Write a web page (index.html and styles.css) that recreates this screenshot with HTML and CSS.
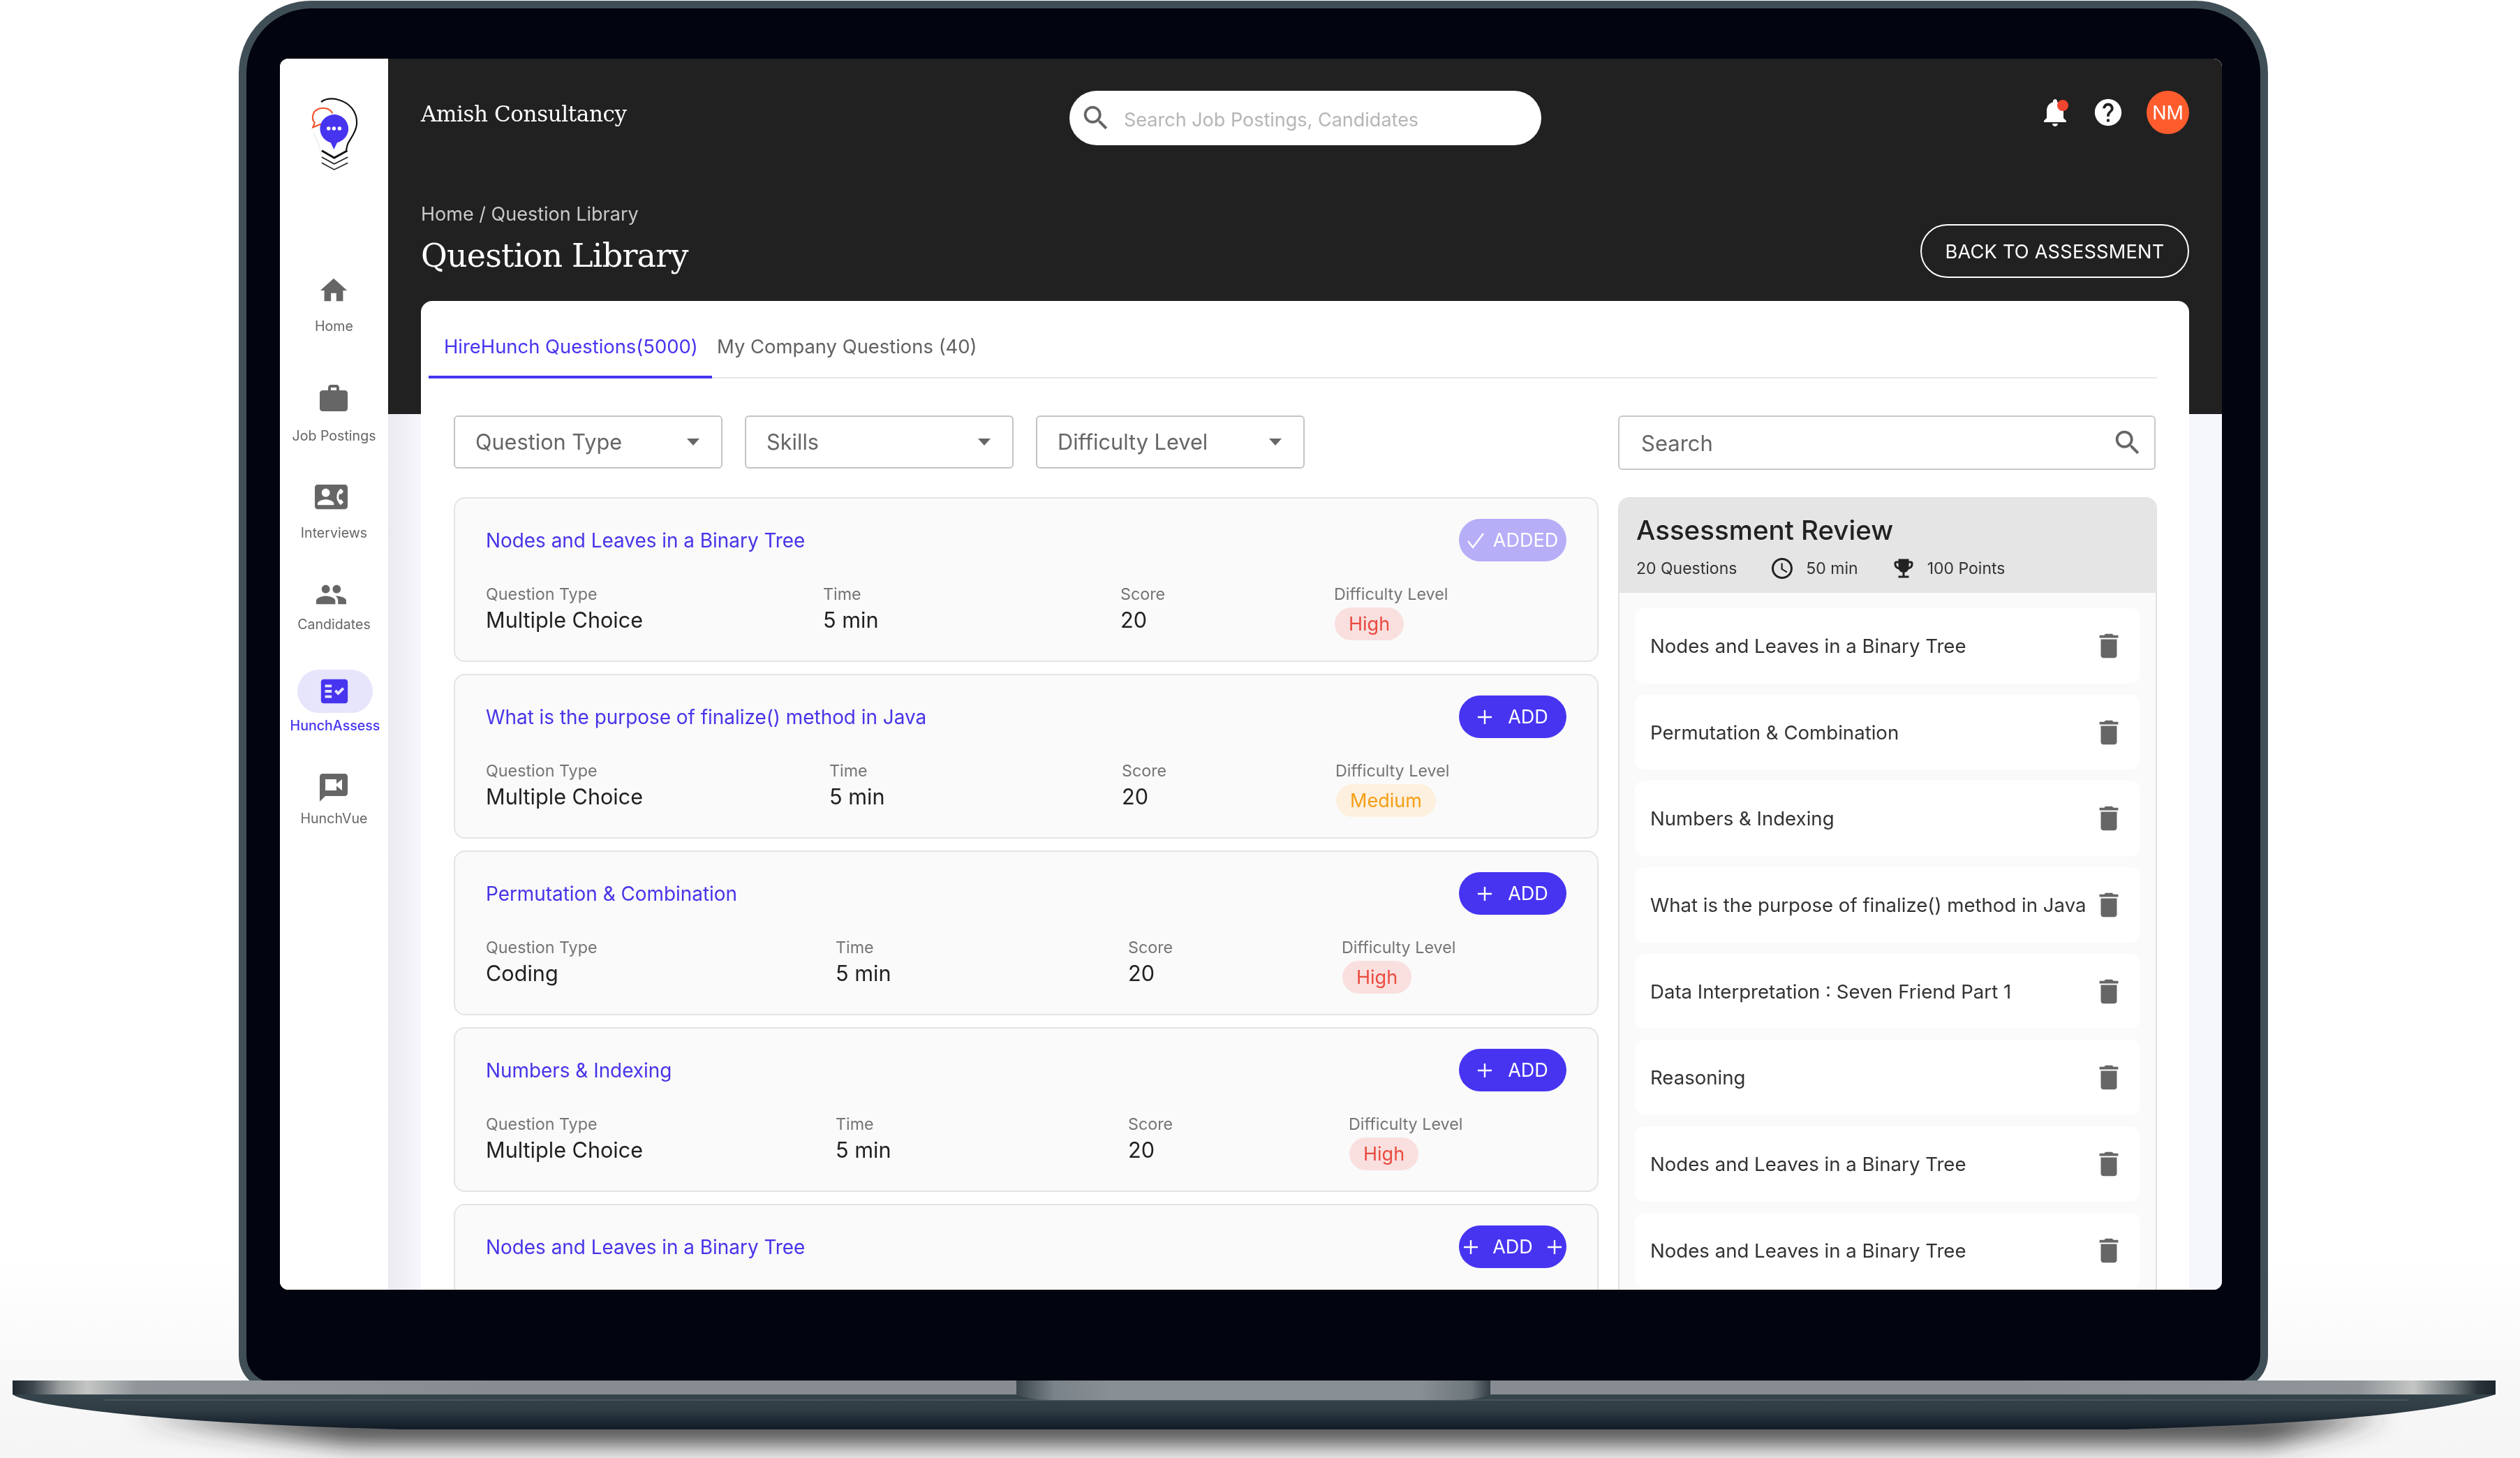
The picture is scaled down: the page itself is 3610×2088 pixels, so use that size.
FILE: index.html
```html
<!DOCTYPE html>
<html lang="en">
<head>
<meta charset="utf-8">
<title>Question Library</title>
<link rel="stylesheet" href="styles.css">
</head>
<body>
<svg class="sprite" aria-hidden="true">
  <symbol id="i-home" viewBox="0 0 24 24"><path d="M10 20v-6h4v6h5v-8h3L12 3 2 12h3v8z"/></symbol>
  <symbol id="i-work" viewBox="0 0 24 24"><path d="M20 6h-4V4c0-1.11-.89-2-2-2h-4c-1.11 0-2 .89-2 2v2H4c-1.11 0-1.99.89-1.99 2L2 19c0 1.11.89 2 2 2h16c1.11 0 2-.89 2-2V8c0-1.11-.89-2-2-2zm-6 0h-4V4h4v2z"/></symbol>
  <symbol id="i-contact" viewBox="0 0 24 24"><path d="M22 3H2C.9 3 0 3.9 0 5v14c0 1.1.9 2 2 2h20c1.1 0 1.99-.9 1.99-2L24 5c0-1.1-.9-2-2-2zM8 6c1.66 0 3 1.34 3 3s-1.34 3-3 3-3-1.34-3-3 1.34-3 3-3zm6 12H2v-1c0-2 4-3.1 6-3.1s6 1.1 6 3.1v1zm3.85-4h1.64L21 16l-1.99 1.99c-1.31-.98-2.28-2.38-2.73-3.99-.18-.64-.28-1.31-.28-2s.1-1.36.28-2c.45-1.62 1.42-3.01 2.73-3.99L21 8l-1.51 2h-1.64c-.22.63-.35 1.3-.35 2s.13 1.37.35 2z"/></symbol>
  <symbol id="i-people" viewBox="0 0 24 24"><path d="M16 11c1.66 0 2.99-1.34 2.99-3S17.66 5 16 5c-1.66 0-3 1.34-3 3s1.34 3 3 3zm-8 0c1.66 0 2.99-1.34 2.99-3S9.66 5 8 5C6.34 5 5 6.34 5 8s1.34 3 3 3zm0 2c-2.33 0-7 1.17-7 3.5V19h14v-2.5c0-2.33-4.67-3.5-7-3.5zm8 0c-.29 0-.62.02-.97.05 1.16.84 1.97 1.97 1.97 3.45V19h6v-2.5c0-2.33-4.67-3.5-7-3.5z"/></symbol>
  <symbol id="i-fact" viewBox="0 0 24 24"><path d="M20 3H4c-1.1 0-2 .9-2 2v14c0 1.1.9 2 2 2h16c1.1 0 2-.9 2-2V5c0-1.1-.9-2-2-2zM10 17H5v-2h5v2zm0-4H5v-2h5v2zm0-4H5V7h5v2zm4.82 6L12 12.16l1.41-1.41 1.41 1.42L17.99 9l1.42 1.42L14.82 15z"/></symbol>
  <symbol id="i-vue" viewBox="0 0 24 24"><path d="M20 2H4c-1.1 0-1.99.9-1.99 2L2 22l4-4h14c1.1 0 2-.9 2-2V4c0-1.1-.9-2-2-2zm-2 12l-4-3.2V14H6V6h8v3.2L18 6v8z"/></symbol>
  <symbol id="i-search" viewBox="0 0 24 24"><path d="M15.5 14h-.79l-.28-.27C15.41 12.59 16 11.11 16 9.5 16 5.91 13.09 3 9.5 3S3 5.91 3 9.5 5.91 16 9.5 16c1.61 0 3.09-.59 4.23-1.57l.27.28v.79l5 4.99L20.49 19l-4.99-5zm-6 0C7.01 14 5 11.99 5 9.5S7.01 5 9.5 5 14 7.01 14 9.5 11.99 14 9.5 14z"/></symbol>
  <symbol id="i-trash" viewBox="0 0 24 24"><path d="M6 19c0 1.1.9 2 2 2h8c1.1 0 2-.9 2-2V7H6v12zM19 4h-3.5l-1-1h-5l-1 1H5v2h14V4z"/></symbol>
  <symbol id="i-plus" viewBox="0 0 24 24"><path d="M12 1v22M1 12h22" fill="none" stroke="currentColor" stroke-width="2.6"/></symbol>
</svg>

<div class="lid">
  <div class="screen">
    <aside class="sidebar">
      <svg class="logo" viewBox="250 305 165 250" aria-hidden="true">
        <path d="M288 322C300 310 325 308 345 314C385 325 410 355 408 395C407 425 385 445 377 465C374 475 373 482 372 490" fill="none" stroke="#111" stroke-width="5"/>
        <path d="M288 500C285 470 272 450 262 425" fill="none" stroke="#eee" stroke-width="4"/>
        <path d="M326 360C318 342 292 338 275 347C257 356 255 380 266 392L260 407L288 396" fill="none" stroke="#f0532d" stroke-width="5"/>
        <path d="M332 364C306 364 284 386 284 412C284 436 302 455 320 459L331 482L342 459C362 454 380 436 380 412C380 386 358 364 332 364Z" fill="#4734ef"/>
        <circle cx="313" cy="411" r="6.5" fill="#fff"/><circle cx="331" cy="411" r="6.5" fill="#fff"/><circle cx="350" cy="411" r="6.5" fill="#fff"/>
        <path d="M290 486L332 510L376 486" fill="none" stroke="#111" stroke-width="7"/>
        <path d="M290 508L332 531L378 508" fill="none" stroke="#222" stroke-width="4"/>
        <path d="M290 527L332 550L378 527" fill="none" stroke="#222" stroke-width="4"/>
      </svg>
      <nav class="nav">
        <a class="nav-item"><span class="nav-icon"><svg class="ico-home"><use href="#i-home"/></svg></span><span class="nav-label">Home</span></a>
        <a class="nav-item"><span class="nav-icon"><svg class="ico-work"><use href="#i-work"/></svg></span><span class="nav-label">Job Postings</span></a>
        <a class="nav-item"><span class="nav-icon nav-icon-left"><svg class="ico-contact"><use href="#i-contact"/></svg></span><span class="nav-label">Interviews</span></a>
        <a class="nav-item"><span class="nav-icon nav-icon-left"><svg class="ico-people"><use href="#i-people"/></svg></span><span class="nav-label">Candidates</span></a>
        <a class="nav-item active"><span class="nav-icon"><svg class="ico-fact"><use href="#i-fact"/></svg></span><span class="nav-label">HunchAssess</span></a>
        <a class="nav-item"><span class="nav-icon"><svg class="ico-vue"><use href="#i-vue"/></svg></span><span class="nav-label">HunchVue</span></a>
      </nav>
    </aside>

    <main class="main">
      <header class="topbar">
        <div class="brand">Amish Consultancy</div>
        <div class="global-search">
          <svg class="search-ico"><use href="#i-search"/></svg>
          <span>Search Job Postings, Candidates</span>
        </div>
        <div class="top-actions">
          <span class="bell">
            <svg class="bell-ico" viewBox="0 0 24 24"><path d="M12 22c1.1 0 2-.9 2-2h-4c0 1.1.89 2 2 2zm6-6v-5c0-3.07-1.64-5.64-4.5-6.32V4c0-.83-.67-1.5-1.5-1.5s-1.5.67-1.5 1.5v.68C7.63 5.36 6 7.92 6 11v5l-2 2v1h16v-1l-2-2z"/></svg>
            <i class="bell-dot"></i>
          </span>
          <svg class="help-ico" viewBox="0 0 24 24"><path d="M12 2C6.48 2 2 6.48 2 12s4.48 10 10 10 10-4.48 10-10S17.52 2 12 2zm1 17h-2v-2h2v2zm2.07-7.75l-.9.92C13.45 12.9 13 13.5 13 15h-2v-.5c0-1.1.45-2.1 1.17-2.83l1.24-1.26c.37-.36.59-.86.59-1.41 0-1.1-.9-2-2-2s-2 .9-2 2H8c0-2.21 1.79-4 4-4s4 1.79 4 4c0 .88-.36 1.68-.93 2.25z"/></svg>
          <span class="avatar">NM</span>
        </div>
      </header>

      <section class="title-row">
        <div class="title-block">
          <div class="crumbs">Home / Question Library</div>
          <h1 class="page-title">Question Library</h1>
        </div>
        <button class="back-btn">BACK TO ASSESSMENT</button>
      </section>

      <section class="sheet">
        <div class="tabs">
          <div class="tab tab-active">HireHunch Questions(5000)</div>
          <div class="tab tab-second">My Company Questions (40)</div>
        </div>
        <div class="columns">
          <div class="col-left">
            <div class="filters">
              <div class="filter">Question Type<i class="caret"></i></div>
              <div class="filter">Skills<i class="caret"></i></div>
              <div class="filter">Difficulty Level<i class="caret"></i></div>
            </div>

            <article class="q-card">
              <div class="q-head"><span class="q-title">Nodes and Leaves in a Binary Tree</span>
                <button class="pill-btn added"><svg class="check" viewBox="0 0 24 24"><path d="M1 13l7 9L23 2" fill="none" stroke="currentColor" stroke-width="2.4"/></svg>ADDED</button></div>
              <div class="q-meta cols-1">
                <div><div class="m-label">Question Type</div><div class="m-value">Multiple Choice</div></div>
                <div><div class="m-label">Time</div><div class="m-value">5 min</div></div>
                <div><div class="m-label">Score</div><div class="m-value">20</div></div>
                <div><div class="m-label">Difficulty Level</div><span class="level high">High</span></div>
              </div>
            </article>

            <article class="q-card">
              <div class="q-head"><span class="q-title">What is the purpose of finalize() method in Java</span>
                <button class="pill-btn"><svg class="plus"><use href="#i-plus"/></svg>ADD</button></div>
              <div class="q-meta cols-2">
                <div><div class="m-label">Question Type</div><div class="m-value">Multiple Choice</div></div>
                <div><div class="m-label">Time</div><div class="m-value">5 min</div></div>
                <div><div class="m-label">Score</div><div class="m-value">20</div></div>
                <div><div class="m-label">Difficulty Level</div><span class="level medium">Medium</span></div>
              </div>
            </article>

            <article class="q-card">
              <div class="q-head"><span class="q-title">Permutation &amp; Combination</span>
                <button class="pill-btn"><svg class="plus"><use href="#i-plus"/></svg>ADD</button></div>
              <div class="q-meta cols-3">
                <div><div class="m-label">Question Type</div><div class="m-value">Coding</div></div>
                <div><div class="m-label">Time</div><div class="m-value">5 min</div></div>
                <div><div class="m-label">Score</div><div class="m-value">20</div></div>
                <div><div class="m-label">Difficulty Level</div><span class="level high">High</span></div>
              </div>
            </article>

            <article class="q-card">
              <div class="q-head"><span class="q-title">Numbers &amp; Indexing</span>
                <button class="pill-btn"><svg class="plus"><use href="#i-plus"/></svg>ADD</button></div>
              <div class="q-meta cols-4">
                <div><div class="m-label">Question Type</div><div class="m-value">Multiple Choice</div></div>
                <div><div class="m-label">Time</div><div class="m-value">5 min</div></div>
                <div><div class="m-label">Score</div><div class="m-value">20</div></div>
                <div><div class="m-label">Difficulty Level</div><span class="level high">High</span></div>
              </div>
            </article>

            <article class="q-card">
              <div class="q-head"><span class="q-title">Nodes and Leaves in a Binary Tree</span>
                <button class="pill-btn pill-double"><svg class="plus"><use href="#i-plus"/></svg>ADD<svg class="plus"><use href="#i-plus"/></svg></button></div>
            </article>
          </div>

          <div class="col-right">
            <div class="panel-search"><span>Search</span><svg class="search-ico-2"><use href="#i-search"/></svg></div>
            <div class="review">
              <div class="review-head">
                <h2 class="review-title">Assessment Review</h2>
                <div class="review-meta">
                  <span>20 Questions</span>
                  <svg class="clock" viewBox="0 0 24 24"><path d="M11.99 2C6.47 2 2 6.48 2 12s4.47 10 9.99 10C17.52 22 22 17.52 22 12S17.52 2 11.99 2zM12 20c-4.42 0-8-3.58-8-8s3.58-8 8-8 8 3.58 8 8-3.58 8-8 8zm.5-13H11v6l5.25 3.15.75-1.23-4.5-2.67z"/></svg>
                  <span>50 min</span>
                  <svg class="trophy" viewBox="0 0 24 24"><path d="M19 5h-2V3H7v2H5c-1.1 0-2 .9-2 2v1c0 2.55 1.92 4.63 4.39 4.94.63 1.5 1.98 2.63 3.61 2.96V19H7v2h10v-2h-4v-3.1c1.63-.33 2.98-1.46 3.61-2.96C19.08 12.63 21 10.55 21 8V7c0-1.1-.9-2-2-2zM5 8V7h2v3.82C5.84 10.4 5 9.3 5 8zm14 0c0 1.3-.84 2.4-2 2.82V7h2v1z"/></svg>
                  <span>100 Points</span>
                </div>
              </div>
              <ul class="review-list">
                <li class="review-row">Nodes and Leaves in a Binary Tree<svg class="trash"><use href="#i-trash"/></svg></li>
                <li class="review-row">Permutation &amp; Combination<svg class="trash"><use href="#i-trash"/></svg></li>
                <li class="review-row">Numbers &amp; Indexing<svg class="trash"><use href="#i-trash"/></svg></li>
                <li class="review-row">What is the purpose of finalize() method in Java<svg class="trash"><use href="#i-trash"/></svg></li>
                <li class="review-row">Data Interpretation : Seven Friend Part 1<svg class="trash"><use href="#i-trash"/></svg></li>
                <li class="review-row">Reasoning<svg class="trash"><use href="#i-trash"/></svg></li>
                <li class="review-row">Nodes and Leaves in a Binary Tree<svg class="trash"><use href="#i-trash"/></svg></li>
                <li class="review-row">Nodes and Leaves in a Binary Tree<svg class="trash"><use href="#i-trash"/></svg></li>
              </ul>
            </div>
          </div>
        </div>
      </section>
    </main>
  </div>
</div>

<svg class="deck" viewBox="0 0 3610 2088" aria-hidden="true">
  <defs>
    <linearGradient id="g-base" x1="0" y1="0" x2="0" y2="1">
      <stop offset="0" stop-color="#36444c"/><stop offset=".45" stop-color="#2f3c44"/><stop offset="1" stop-color="#0f1a25"/>
    </linearGradient>
    <linearGradient id="g-strip" x1="0" y1="0" x2="1" y2="0">
      <stop offset="0" stop-color="#20282e"/><stop offset=".008" stop-color="#3c464c"/><stop offset=".019" stop-color="#9a9e9f"/><stop offset=".03" stop-color="#c4c6c4"/><stop offset=".05" stop-color="#8f9599"/><stop offset=".2" stop-color="#868c92"/>
      <stop offset=".8" stop-color="#868c92"/><stop offset=".945" stop-color="#8f9599"/><stop offset=".967" stop-color="#c4c6c4"/><stop offset=".983" stop-color="#70787c"/><stop offset=".993" stop-color="#2a343a"/><stop offset="1" stop-color="#1b242a"/>
    </linearGradient>
    <linearGradient id="g-notch" x1="0" y1="0" x2="1" y2="0">
      <stop offset="0" stop-color="#39444b"/><stop offset=".08" stop-color="#7a8389"/><stop offset=".2" stop-color="#888f95"/><stop offset=".85" stop-color="#888f95"/><stop offset=".96" stop-color="#6c757a"/><stop offset="1" stop-color="#333e45"/>
    </linearGradient>
    <filter id="f-shadow" x="-5%" y="-200%" width="110%" height="500%"><feGaussianBlur stdDeviation="18"/></filter>
  </defs>
  <path d="M190 2025H3420L3250 2066H500Z" fill="#333" filter="url(#f-shadow)"/>
  <path class="deck-base" d="M18 1997H3575C3490 2025 3300 2040 3040 2047H574C380 2042 190 2032 64 2010C40 2005 25 2002 18 1997Z" fill="url(#g-base)"/>
  <rect x="150" y="2004" width="3300" height="2" fill="#48555d"/>
  <rect x="18" y="1977" width="3557" height="20" fill="url(#g-strip)"/>
  <path d="M1456 1977H2135V1997C2125 2002 2110 2005 2080 2005H1510C1480 2005 1466 2002 1456 1997Z" fill="url(#g-notch)"/>
</svg>
</body>
</html>
```
FILE: styles.css
```css
* { box-sizing: border-box; }
html, body { margin: 0; padding: 0; }
body {
  position: relative;
  width: 3610px;
  height: 2088px;
  overflow: hidden;
  font-family: Inter, "Noto Sans", sans-serif;
  color: #212121;
  background: linear-gradient(#fff 0, #fff 1800px, #f8f8f8 1977px, #f5f5f5 100%);
}
.sprite { position: absolute; width: 0; height: 0; }
svg { fill: currentColor; display: block; flex: none; }
button { font: inherit; cursor: pointer; }
h1, h2, ul { margin: 0; padding: 0; font-weight: 400; }
li { list-style: none; }

/* laptop */
.lid {
  position: absolute;
  left: 342px;
  top: 1px;
  width: 2907px;
  height: 1990px;
  padding: 72px 55px 0 48px;
  border: 11px solid #404f57;
  border-radius: 104px 104px 50px 50px;
  background: #02040f;
}
.deck { position: absolute; left: 0; top: 0; width: 3610px; height: 2088px; pointer-events: none; }
.screen {
  display: flex;
  height: 1763px;
  border-radius: 12px;
  overflow: hidden;
  background: #fff;
  filter: blur(.5px);
}

/* sidebar */
.sidebar {
  width: 155px;
  flex: none;
  padding-top: 54px;
  background: #fff;
}
.logo { width: 70px; height: 108px; margin: 0 auto 0 43px; }
.nav { display: flex; flex-direction: column; align-items: center; margin-top: 139px; }
.nav-item { display: flex; flex-direction: column; align-items: center; color: #666; }
.nav-icon {
  display: flex;
  align-items: center;
  justify-content: center;
  width: 108px;
  height: 62px;
  border-radius: 31px;
}
.nav-label { font-size: 19.6px; line-height: 28px; white-space: nowrap; }
.nav-item:nth-child(1) .nav-label { margin-top: 6px; }
.nav-item:nth-child(2) { margin-top: 59px; }
.nav-item:nth-child(2) .nav-label { margin-top: 8px; }
.nav-item:nth-child(3) { margin-top: 42px; }
.nav-item:nth-child(3) .nav-label { margin-top: 7px; }
.nav-item:nth-child(4) { margin-top: 43px; }
.nav-item:nth-child(4) .nav-label { margin-top: -2px; }
.nav-item:nth-child(5) { margin-top: 51px; margin-left: 3px; }
.nav-item:nth-child(5) .nav-label { margin-top: 4px; }
.nav-item:nth-child(6) { margin-top: 44px; }
.nav-item:nth-child(6) .nav-label { margin-top: -1px; }
.nav-icon svg { position: relative; left: -1px; }
.nav-icon-left svg { left: -4px; }
.ico-home { width: 46px; height: 46px; }
.ico-work { width: 48px; height: 48px; }
.ico-contact { width: 47px; height: 47px; }
.ico-people { width: 47px; height: 47px; }
.ico-fact { width: 46px; height: 46px; }
.ico-vue { width: 48px; height: 48px; }
.nav-item.active { color: #4734ef; }
.active .nav-icon { background: #e6e5fb; }
.active .nav-label { font-weight: 500; }

/* main */
.main {
  flex: 1;
  min-width: 0;
  padding: 46px 47px 0;
  background:
    linear-gradient(#212121, #212121) top / 100% 509px no-repeat,
    linear-gradient(90deg, #eaeaef 0, #f6f6fd 47px, #f6f6fd 100%);
}
.topbar { display: flex; align-items: flex-start; height: 78px; }
.brand {
  width: 929px;
  font-family: "DejaVu Serif", "Liberation Serif", serif;
  font-size: 31px;
  line-height: 66px;
  color: #fff;
  letter-spacing: -.4px;
}
.global-search {
  display: flex;
  align-items: center;
  width: 676px;
  height: 78px;
  padding-left: 15px;
  border-radius: 39px;
  background: #fff;
  color: #b5b5b5;
  font-size: 27px;
}
.global-search span { margin-left: 17px; margin-top: 4px; }
.search-ico { width: 46px; height: 46px; color: #666; }
.top-actions { display: flex; align-items: center; margin-left: auto; height: 62px; }
.bell { position: relative; display: block; width: 48px; height: 48px; }
.bell-ico { width: 48px; height: 48px; color: #fff; }
.bell-dot {
  position: absolute;
  left: 27px;
  top: 6px;
  width: 16px;
  height: 16px;
  border-radius: 50%;
  background: #f0452f;
}
.help-ico { width: 46px; height: 46px; margin-left: 29px; color: #fff; }
.avatar {
  display: flex;
  align-items: center;
  justify-content: center;
  width: 61px;
  height: 62px;
  margin-left: 32px;
  border-radius: 50%;
  background: #ff5c2e;
  color: #fff;
  font-size: 27px;
}

.title-row {
  display: flex;
  justify-content: space-between;
  align-items: flex-end;
  margin-top: 81px;
}
.title-block { padding-bottom: 2px; }
.crumbs { font-size: 27px; line-height: 36px; color: #c9c9c9; }
.page-title {
  margin-top: 11px;
  font-family: "DejaVu Serif", "Liberation Serif", serif;
  font-size: 46px;
  line-height: 60px;
  color: #fff;
  letter-spacing: -.8px;
}
.back-btn {
  width: 385px;
  height: 77px;
  padding: 2px 0 0;
  border: 2px solid #fff;
  border-radius: 39px;
  background: transparent;
  color: #fff;
  font-size: 27.2px;
  letter-spacing: .2px;
}

/* sheet */
.sheet {
  height: 1500px;
  margin-top: 33px;
  padding: 0 46px 0 11px;
  border-radius: 16px 16px 0 0;
  background: #fff;
}
.tabs { display: flex; height: 111px; border-bottom: 2px solid #e6e6e6; }
.tab { height: 111px; padding-top: 47px; font-size: 27.4px; line-height: 36px; color: #616161; }
.tab-active { width: 406px; padding-left: 22px; border-bottom: 4px solid #4734ef; color: #4734ef; white-space: nowrap; }
.tab-second { padding-left: 7px; }

.columns { display: grid; grid-template-columns: 1640px 772px; column-gap: 28px; padding: 53px 0 0 36px; }
.filters { display: flex; gap: 32px; margin-bottom: 41px; }
.filter {
  display: flex;
  align-items: center;
  justify-content: space-between;
  width: 385px;
  height: 76px;
  padding: 0 31px 2px 29px;
  border: 2px solid #c4c4c4;
  border-radius: 6px;
  color: #666;
  font-size: 30.7px;
}
.caret { width: 0; height: 0; margin-top: 2px; border: 9px solid transparent; border-top: 10px solid #666; border-bottom: 0; }

.q-card {
  height: 236px;
  margin-bottom: 17px;
  padding: 29px 44px 0;
  border: 2px solid #e4e4e4;
  border-radius: 16px;
  background: #fafafa;
}
.q-head { display: flex; justify-content: space-between; align-items: center; height: 61px; }
.q-title { font-size: 27.9px; color: #4734e8; }
.pill-btn {
  display: flex;
  align-items: center;
  justify-content: center;
  gap: 22px;
  width: 154px;
  height: 61px;
  padding: 0;
  border: 0;
  border-radius: 31px;
  background: #4734f1;
  color: #fff;
  font-size: 27px;
}
.pill-btn.added { gap: 13px; background: #b6aef7; }
.pill-double { gap: 20px; }
.plus { width: 22px; height: 22px; }
.check { width: 24px; height: 24px; }
.q-meta { display: grid; margin-top: 32px; }
.cols-1 { grid-template-columns: 483px 426px 306px auto; }
.cols-2 { grid-template-columns: 492px 419px 306px auto; }
.cols-3 { grid-template-columns: 501px 419px 306px auto; }
.cols-4 { grid-template-columns: 501px 419px 316px auto; }
.m-label { font-size: 23.3px; line-height: 30px; color: #757575; }
.m-value { margin-top: 2px; font-size: 30.6px; line-height: 40px; color: #212121; }
.level {
  display: inline-block;
  height: 47px;
  margin-top: 4px;
  margin-left: 1px;
  padding: 0 20px;
  border-radius: 24px;
  font-size: 27px;
  line-height: 47px;
}
.high { background: #f9e0df; color: #ea4b40; }
.medium { background: #fdf0de; color: #f59e16; }

/* right column */
.panel-search {
  display: flex;
  align-items: center;
  justify-content: space-between;
  width: 770px;
  height: 78px;
  margin-bottom: 39px;
  padding: 0 15px 0 31px;
  border: 2px solid #c9c9c9;
  border-radius: 6px;
  color: #666;
  font-size: 31px;
}
.search-ico-2 { width: 46px; height: 46px; color: #666; }
.review {
  height: 1200px;
  border: 2px solid #e2e2e2;
  border-radius: 16px 16px 0 0;
  background: #fafafa;
  overflow: hidden;
}
.review-head { height: 135px; padding: 20px 24px 0; background: #e5e5e5; }
.review-title { font-size: 38.5px; line-height: 50px; font-weight: 500; color: #212121; }
.review-meta { display: flex; align-items: center; margin-top: 13px; height: 34px; font-size: 23px; color: #333; }
.clock { width: 36px; height: 36px; margin-left: 47px; margin-right: 16px; color: #222; }
.trophy { width: 36px; height: 36px; margin-left: 47px; margin-right: 16px; color: #222; }
.review-list { padding: 22px 22px 0; }
.review-row {
  display: flex;
  align-items: center;
  justify-content: space-between;
  height: 107.7px;
  margin-bottom: 16px;
  padding: 0 22px 0 22px;
  border-radius: 14px;
  background: #fff;
  font-size: 27.6px;
  color: #333;
}
.trash { width: 46px; height: 46px; color: #666; }
```
